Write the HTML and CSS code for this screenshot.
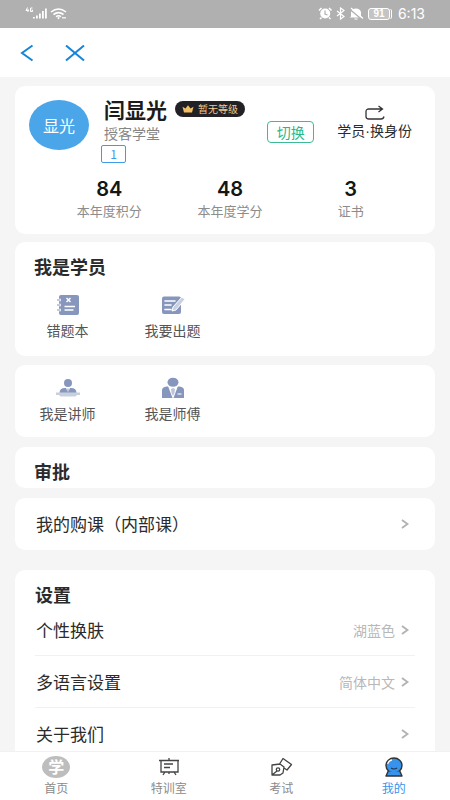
FILE: index.html
```html
<!DOCTYPE html>
<html lang="zh-CN">
<head>
<meta charset="utf-8">
<meta name="viewport" content="width=device-width, initial-scale=1">
<title>我的</title>
<link rel="stylesheet" href="styles.css">
</head>
<body>
<svg class="defs" aria-hidden="true">
  <symbol id="chevron" viewBox="0 0 8 10"><path d="M1 1l5.500 4L1 9" fill="none" stroke="#b2b2b2" stroke-width="1.900"/></symbol>
</svg>
<div class="status">
  <div class="status-group">
    <svg width="42" height="14" viewBox="0 0 42 14" fill="#fff" stroke="#fff">
      <path d="M2.500 .5L1 3.500h2.700M3 2v3M7.500 1h-2v3.500h2V3h-1" fill="none" stroke-width="1"/>
      <path d="M8 10h1.800v1.500H8zM11 8.500h1.800v3H11zM14 6.500h1.800v5H14zM17 4h1.800v7.500H17zM20 1.500h1.800v10H20z" stroke="none"/>
      <path d="M26 5q7.500-6 15 0M28.500 7.500q5-3.800 10 0M31 9.700q2.500-1.800 5 0" fill="none" stroke-width="1.600"/>
      <circle cx="33.500" cy="11" r=".7"/><path d="M37 10.800h4" stroke-width="1.200"/>
    </svg>
  </div>
  <div class="status-group">
    <svg width="46" height="14" viewBox="0 0 46 14" fill="none" stroke="#fff">
      <path d="M1 3.500L3.500 1M13.500 3.500L11 1M3.500 10.500L2 12M11 10.500l1.500 1.500" stroke-width="1.500"/>
      <circle cx="7.200" cy="6.500" r="5" fill="#fff" stroke="none"/><path d="M7 3.500v3.500l2.500 1" stroke="#b0b0b0" stroke-width="1.200"/>
      <path d="M19 4l7 5.500-3.500 2.500V1L26 3.500 19 9" stroke-width="1.200"/>
      <path d="M33 9.500V5q1-3.500 5-3.500T43 5v4.500l1.500 1h-13zM36.500 11.500h3v1h-3z" fill="#fff" stroke="none"/>
      <path d="M32 2.500l12 10" stroke="#b0b0b0" stroke-width="1.400"/><path d="M33 1l12 10.500" stroke-width="1.200"/>
    </svg>
    <span class="battery">91</span>
    <span class="clock">6:13</span>
  </div>
</div>
<header class="topbar">
  <button class="icon-btn" aria-label="返回"><svg width="14" height="18" viewBox="0 0 14 18"><path d="M12.500 1.500L2 9l10.500 7.500" fill="none" stroke="#1685d9" stroke-width="2"/></svg></button>
  <button class="icon-btn" aria-label="关闭"><svg width="20" height="16" viewBox="0 0 20 16"><path d="M1 .5l18 15M19 .5L1 15.500" fill="none" stroke="#1685d9" stroke-width="2"/></svg></button>
</header>
<main class="content">
  <section class="card profile">
    <div class="profile-head">
      <div class="avatar">显光</div>
      <div class="identity">
        <div class="name-row">
          <h1 class="name">闫显光</h1>
          <span class="level"><svg width="12" height="8" viewBox="0 0 12 8"><path d="M.5 1.800l3 1.800L6 .3l2.500 3.300 3-1.800L10 7.500H2z" fill="#f2c063"/></svg>暂无等级</span>
        </div>
        <p class="org">授客学堂</p>
        <span class="tag">1</span>
      </div>
      <button class="switch">切换</button>
      <button class="role">
        <svg width="20" height="16" viewBox="0 0 20 16" fill="none" stroke="#333" stroke-width="1.300"><path d="M17 4H4Q1 4 1 6.500v5Q1 14 4 14h12q2.500 0 3-2.500M13.500 1l4 3-4 3"/></svg>
        <span class="role-text">学员·换身份</span>
      </button>
    </div>
    <dl class="stats">
      <div class="stat"><dd>84</dd><dt>本年度积分</dt></div>
      <div class="stat"><dd>48</dd><dt>本年度学分</dt></div>
      <div class="stat"><dd>3</dd><dt>证书</dt></div>
    </dl>
  </section>

  <section class="card student">
    <h2 class="title">我是学员</h2>
    <div class="grid">
      <a class="tile" href="#"><svg width="24" height="22" viewBox="0 0 24 22"><rect x="3" y="1" width="20" height="20" rx="2" fill="#8796bd"/><path d="M1 6h4M1 11h4M1 16h4" stroke="#fff" stroke-width="2.500"/><path d="M1 6h3.500M1 11h3.500M1 16h3.500" stroke="#8796bd"/><path d="M10.500 4l4 4m0-4l-4 4M8.500 12.500H19M8.500 16h9" stroke="#fff" stroke-width="1.500"/></svg>错题本</a>
      <a class="tile" href="#"><svg width="24" height="22" viewBox="0 0 24 22"><rect x="1" y="2.500" width="19" height="17.500" rx="2" fill="#8796bd"/><path d="M4 7h10M4 11h6M4 15.500h6" stroke="#fff" stroke-width="1.600" stroke-linecap="round"/><path d="M21 3l3 2.200-9 10.800-4 1 1-4z" fill="#c9d0e1" stroke="#fff"/></svg>我要出题</a>
    </div>
  </section>

  <section class="card teacher">
    <div class="grid">
      <a class="tile" href="#"><svg width="24" height="22" viewBox="0 0 24 22"><circle cx="12" cy="6" r="4" fill="#8796bd"/><path d="M3.500 16q0-5 5.500-5h6q5.500 0 5.500 5z" fill="#8796bd"/><path d="M10 11l2 4.500 2-4.500z" fill="#fff"/><path d="M11.500 11.500h1v4h-1z" fill="#8796bd"/><path d="M0 15.500h24v2.500h-3l-1.500 1.500h-15L3 18H0z" fill="#c9cfdd"/></svg>我是讲师</a>
      <a class="tile" href="#"><svg width="24" height="22" viewBox="0 0 24 22"><path d="M1 13q0-3 4.500-3.500h13Q23 10 23 13v8H1z" fill="#8796bd"/><path d="M7 9h10l-4.500 12h-1z" fill="#fff"/><ellipse cx="12" cy="5.200" rx="5.500" ry="4.500" fill="#8796bd"/><path d="M10 12l2-1 2 1-.5 4L12 19l-1.500-3z" fill="#bcc5db"/><path d="M16.500 17h4" stroke="#dce1ee" stroke-width="1.500"/></svg>我是师傅</a>
    </div>
  </section>

  <section class="card approval"><h2 class="title">审批</h2></section>

  <section class="card course">
    <a class="row" href="#"><span>我的购课（内部课）</span><svg class="arrow"><use href="#chevron"/></svg></a>
  </section>

  <section class="card settings">
    <h2 class="title">设置</h2>
    <a class="row" href="#"><span>个性换肤</span><span class="value">湖蓝色</span><svg class="arrow"><use href="#chevron"/></svg></a>
    <a class="row" href="#"><span>多语言设置</span><span class="value">简体中文</span><svg class="arrow"><use href="#chevron"/></svg></a>
    <a class="row" href="#"><span>关于我们</span><svg class="arrow"><use href="#chevron"/></svg></a>
  </section>
</main>
<nav class="tabs">
  <a class="tab" href="#"><span class="school">学</span>首页</a>
  <a class="tab" href="#"><svg width="28" height="22" viewBox="0 0 28 22" fill="none" stroke="#444" stroke-width="1.300"><path d="M4 4.500h20M6 4.500v11.500h17V4.500M14 2v2.500M9 8h9M9 11.500h6M10 16l-2 3M19 16l2 3M14 16v2"/></svg>特训室</a>
  <a class="tab" href="#"><svg width="28" height="22" viewBox="0 0 28 22" fill="none" stroke="#444" stroke-width="1.300" stroke-linejoin="round"><path d="M5 9l8-1 4 3-1 6-3 2H5zM5 19l5-4M12.500 8L16 2.500l8.500 6-4.500 5.500-3-2"/><circle cx="11" cy="13.500" r="1.700"/></svg>考试</a>
  <a class="tab active" href="#"><svg width="28" height="22" viewBox="0 0 28 22"><path d="M8.500 14.500L6 20h16l-2.500-5.500z" fill="#3793ed" stroke="#333" stroke-width="1.400" stroke-linejoin="round"/><ellipse cx="14" cy="9.500" rx="8" ry="7.500" fill="#3793ed" stroke="#333" stroke-width="1.400"/><path d="M8.500 15.500h11L18 18h-8z" fill="#3793ed"/><path d="M7.700 8Q8.500 4.500 12 3.800" fill="none" stroke="#fff" stroke-width="1.200"/><path d="M11 12q3 2 6 0" fill="none" stroke="#234" stroke-width="1.200"/></svg>我的</a>
</nav>
</body>
</html>
```
FILE: styles.css
```css
* { box-sizing: border-box; margin: 0; padding: 0; }
body {
  display: flex;
  flex-direction: column;
  height: 100vh;
  background: #f5f5f5;
  color: #2b2b2b;
  font-family: "Noto Sans CJK SC", sans-serif;
}
button { border: 0; background: none; font: inherit; color: inherit; }
a { color: inherit; text-decoration: none; }
svg { display: block; flex: none; }
.defs { position: absolute; width: 0; height: 0; }

.status {
  display: flex;
  justify-content: space-between;
  flex: none;
  height: 28px;
  padding: 0 25px;
  background: #b0b0b0;
  color: #fff;
}
.status-group { display: flex; align-items: center; gap: 4px; }
.battery {
  width: 22px;
  height: 12px;
  border: 1px solid #fff;
  border-radius: 3px;
  background: #c4c4c4;
  font: bold 10px/10px "Liberation Sans", sans-serif;
  text-align: center;
  box-shadow: 2px 0 0 -1px #b0b0b0, 3px 0 0 -1px #fff;
}
.clock { margin-left: 4px; font: 14px/16px Inter, sans-serif; }

.topbar {
  display: flex;
  align-items: center;
  gap: 31px;
  flex: none;
  height: 49px;
  padding: 0 20px;
  background: #fff;
}
.icon-btn { display: flex; }

.content {
  display: flex;
  flex-direction: column;
  flex: 1;
  gap: 10px;
  min-height: 0;
  padding: 9px 15px 0;
  overflow: hidden;
}
.card { flex: none; border-radius: 10px; background: #fff; }
.title { font-size: 18px; line-height: 24px; font-weight: 700; }

.profile { padding: 12px 14px 13px; margin-bottom: -2px; }
.profile-head { display: flex; }
.avatar {
  width: 60px;
  height: 50px;
  margin-top: 2px;
  border-radius: 50%;
  background: #4aa5e9;
  color: #fff;
  font-size: 16px;
  line-height: 50px;
  text-align: center;
}
.identity { flex: 1; padding-left: 15px; }
.name-row { display: flex; align-items: center; gap: 8px; height: 22px; white-space: nowrap; }
.name { font-size: 21px; line-height: 22px; font-weight: 700; color: #1c1c1c; }
.level {
  display: flex;
  align-items: center;
  gap: 4px;
  height: 16px;
  padding: 0 7px;
  border-radius: 8px;
  background: #222126;
  color: #f2c98a;
  font-size: 10px;
  line-height: 16px;
}
.org { padding-top: 3px; color: #858585; font-size: 14px; line-height: 20px; }
.tag {
  display: block;
  width: 25px;
  height: 18px;
  margin: 2px 0 0 -3px;
  border: 1px solid #3f9be6;
  border-radius: 2px;
  color: #3f9be6;
  font-size: 12px;
  line-height: 16px;
  text-align: center;
}
.switch {
  width: 47px;
  height: 22px;
  margin-top: 23px;
  border: 1px solid #3dbb96;
  border-radius: 4px;
  color: #26b98c;
  font-size: 14px;
  line-height: 20px;
}
.role {
  display: flex;
  flex-direction: column;
  align-items: center;
  align-self: flex-start;
  gap: 1px;
  margin: 7px 9px 0 23px;
  font-size: 14px;
  line-height: 18px;
  white-space: nowrap;
}
.role-text { font-family: "Liberation Sans", "Noto Sans CJK SC", sans-serif; }
.stats { display: grid; grid-template-columns: repeat(3, 1fr); margin-top: 14px; padding: 0 10px 0 20px; }
.stat { display: flex; flex-direction: column; align-items: center; }
.stat dd { color: #151515; font: 600 20px/24px Inter, sans-serif; }
.stat dt { color: #8c8c8c; font-size: 13px; line-height: 20px; }

.grid { display: grid; grid-template-columns: repeat(4, 1fr); }
.tile {
  display: flex;
  flex-direction: column;
  align-items: center;
  gap: 4px;
  color: #555;
  font-size: 14px;
  line-height: 20px;
}
.student { padding: 12px 0 16px; margin-bottom: -1px; }
.student .title { padding: 0 19px; }
.student .grid { padding-top: 16px; }
.teacher { padding: 12px 0 14px; }
.approval { padding: 12px 19px 5px; }
.course { padding: 0 20px; }
.settings { margin-top: 10px; padding: 12px 20px 0; }
.row {
  display: flex;
  align-items: center;
  gap: 6px;
  height: 52px;
  padding: 0 6px 0 1px;
  border-bottom: 1px solid #f1f1f1;
  font-size: 17px;
  line-height: 24px;
}
.course .row { border: 0; }
.row > :first-child { flex: 1; }
.settings .title { height: 22px; }
.arrow { width: 8px; height: 10px; }
.value { color: #b8b8b8; font-size: 14px; line-height: 20px; }

.tabs {
  display: grid;
  grid-template-columns: repeat(4, 1fr);
  flex: none;
  height: 49px;
  padding-top: 4px;
  border-top: 1px solid #f1f1f1;
  background: #fff;
}
.tab {
  display: flex;
  flex-direction: column;
  align-items: center;
  gap: 1px;
  color: #8a8a8a;
  font-size: 12px;
  line-height: 18px;
}
.active { color: #3793ed; }
.school {
  width: 28px;
  height: 22px;
  border-radius: 50%;
  background: #bdbdbd;
  color: #fff;
  font-size: 16px;
  font-weight: 700;
  line-height: 21px;
  text-align: center;
}
```
